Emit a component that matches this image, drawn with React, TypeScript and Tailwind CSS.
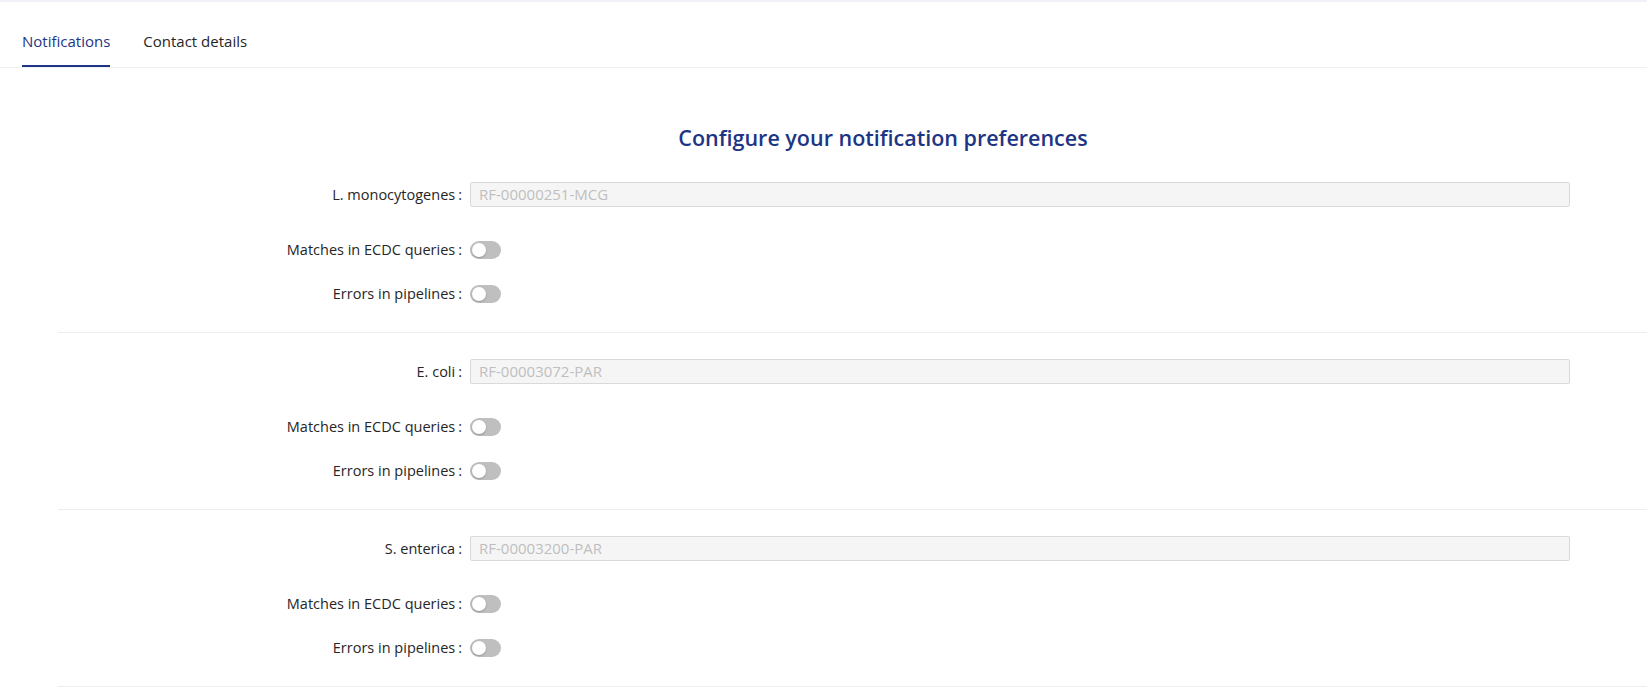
import { useState } from "react";

type Pathogen = { name: string; code: string };

const PATHOGENS: Pathogen[] = [
  { name: "L. monocytogenes", code: "RF-00000251-MCG" },
  { name: "E. coli", code: "RF-00003072-PAR" },
  { name: "S. enterica", code: "RF-00003200-PAR" },
];

const TABS = ["Notifications", "Contact details"];

function Label({ text }: { text: string }) {
  return (
    <div className="flex w-[412px] shrink-0 items-center justify-end text-[14.5px] text-[#262626]">
      <span>{text}</span>
      <span className="ml-[3px] mr-[8px]">:</span>
    </div>
  );
}

function Toggle() {
  const [on, setOn] = useState(false);
  return (
    <button
      onClick={() => setOn(!on)}
      className={`relative h-[18px] w-[31px] rounded-full ${on ? "bg-[#1d3584]" : "bg-[#bfbfbf]"}`}
    >
      <span
        className={`absolute top-[2px] h-[14px] w-[14px] rounded-full bg-white shadow-[0_1px_2px_rgba(0,35,11,0.25)] ${
          on ? "left-[15px]" : "left-[2px]"
        }`}
      />
    </button>
  );
}

function Section({ p }: { p: Pathogen }) {
  return (
    <div className="flex flex-col border-b border-[#eeeeee] pb-[26px]">
      <div className="flex h-[25px]">
        <Label text={p.name} />
        <div className="flex h-[25px] w-[1100px] items-center rounded-[2px] border border-[#d9d9d9] bg-[#f5f5f5] px-[8px] text-[15px] text-[#bfbfbf]">
          {p.code}
        </div>
      </div>
      <div className="mt-[30px] flex h-[25px] items-center">
        <Label text="Matches in ECDC queries" />
        <Toggle />
      </div>
      <div className="mt-[19px] flex h-[25px] items-center">
        <Label text="Errors in pipelines" />
        <Toggle />
      </div>
    </div>
  );
}

export default function App() {
  const [tab, setTab] = useState(0);
  return (
    <div className="min-h-screen w-full overflow-hidden bg-white font-['Open_Sans',sans-serif]">
      <div className="h-[2px] bg-[#f0f1f6]" />
      <nav className="flex h-[66px] items-end gap-[33px] border-b border-[#f0f0f0] pl-[22px]">
        {TABS.map((t, i) => (
          <button
            key={t}
            onClick={() => setTab(i)}
            className={`relative pb-[15px] text-[15px] leading-[22px] ${
              tab === i ? "text-[#1d3584]" : "text-[#262626]"
            }`}
          >
            {t}
            {tab === i && <span className="absolute inset-x-0 bottom-0 h-[2px] bg-[#1d3584]" />}
          </button>
        ))}
      </nav>

      <div className="ml-[58px] w-[1650px]">
        <h2 className="mt-[56px] text-center text-[21.5px] font-semibold leading-[28px] text-[#1d3584]">
          Configure your notification preferences
        </h2>
        <div className="mt-[30px]">
          {PATHOGENS.map((p, i) => (
            <div key={p.name} className={i > 0 ? "pt-[26px]" : ""}>
              <Section p={p} />
            </div>
          ))}
        </div>
      </div>
    </div>
  );
}
